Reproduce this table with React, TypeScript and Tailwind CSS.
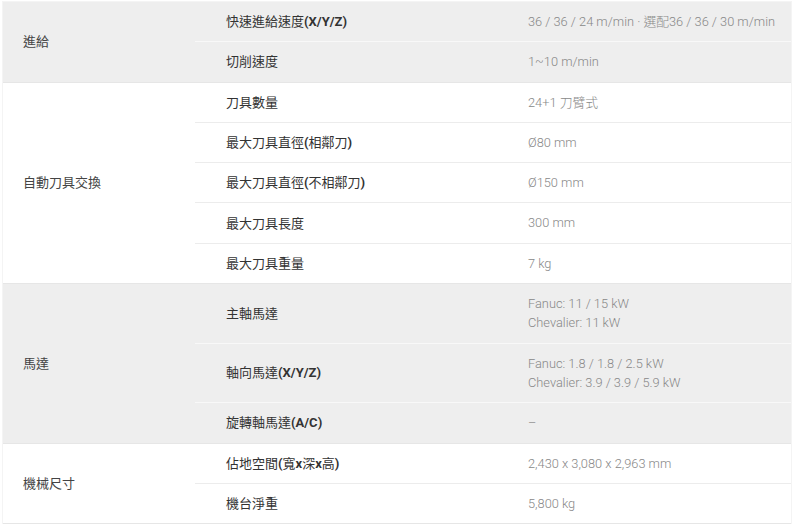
import React from "react";

type Row = { label: string; values: string[] };
type Group = { name: string; gray: boolean; rows: Row[] };

const groups: Group[] = [
  {
    name: "進給",
    gray: true,
    rows: [
      { label: "快速進給速度(X/Y/Z)", values: ["36 / 36 / 24 m/min · 選配36 / 36 / 30 m/min"] },
      { label: "切削速度", values: ["1~10 m/min"] },
    ],
  },
  {
    name: "自動刀具交換",
    gray: false,
    rows: [
      { label: "刀具數量", values: ["24+1 刀臂式"] },
      { label: "最大刀具直徑(相鄰刀)", values: ["Ø80 mm"] },
      { label: "最大刀具直徑(不相鄰刀)", values: ["Ø150 mm"] },
      { label: "最大刀具長度", values: ["300 mm"] },
      { label: "最大刀具重量", values: ["7 kg"] },
    ],
  },
  {
    name: "馬達",
    gray: true,
    rows: [
      { label: "主軸馬達", values: ["Fanuc: 11 / 15 kW", "Chevalier: 11 kW"] },
      { label: "軸向馬達(X/Y/Z)", values: ["Fanuc: 1.8 / 1.8 / 2.5 kW", "Chevalier: 3.9 / 3.9 / 5.9 kW"] },
      { label: "旋轉軸馬達(A/C)", values: ["–"] },
    ],
  },
  {
    name: "機械尺寸",
    gray: false,
    rows: [
      { label: "佔地空間(寬x深x高)", values: ["2,430 x 3,080 x 2,963 mm"] },
      { label: "機台淨重", values: ["5,800 kg"] },
    ],
  },
];

function Label({ text }: { text: string }) {
  const parts = text.split(/([\x00-\x7F]+)/).filter((p) => p.length > 0);
  return (
    <>
      {parts.map((p, i) =>
        /^[\x00-\x7F]+$/.test(p) ? (
          <span key={i} className="font-bold">
            {p}
          </span>
        ) : (
          <span key={i}>{p}</span>
        )
      )}
    </>
  );
}

export default function App() {
  return (
    <div className="w-[794px] bg-white pt-px" style={{ fontFamily: "Roboto, 'Noto Sans CJK TC', sans-serif" }}>
      <div className="ml-[2px] w-[790px] border-x border-t border-[#f4f4f4]">
        {groups.map((g, gi) => (
          <div
            key={gi}
            className={
              g.gray
                ? "flex border-b border-[#e6e6e6] bg-[#eeeeee]"
                : "flex border-b border-[#e6e6e6] bg-white"
            }
          >
            <div className="flex w-[192px] shrink-0 items-center pl-[20px] text-[13px] text-[#444]">
              {g.name}
            </div>
            <div className="flex flex-1 flex-col">
              {g.rows.map((r, ri) => (
                <div
                  key={ri}
                  className={
                    ri === g.rows.length - 1
                      ? "flex"
                      : g.gray
                      ? "flex border-b border-[#f8f8f8]"
                      : "flex border-b border-[#ececec]"
                  }
                >
                  <div className="flex w-[302px] shrink-0 items-center pl-[31px] text-[13px] leading-[19px] text-[#333]">
                    <span>
                      <Label text={r.label} />
                    </span>
                  </div>
                  <div className="flex flex-1 flex-col justify-center py-[10px] pl-[31px] text-[12.8px] font-light text-[#888]">
                    {r.values.map((v, vi) => (
                      <div key={vi} className="h-[19.3px] overflow-visible whitespace-nowrap leading-[19.3px]">
                        {v}
                      </div>
                    ))}
                  </div>
                </div>
              ))}
            </div>
          </div>
        ))}
      </div>
    </div>
  );
}
